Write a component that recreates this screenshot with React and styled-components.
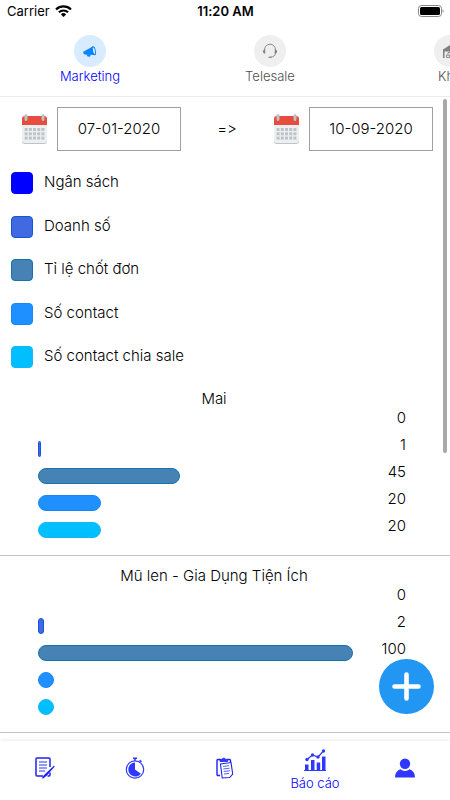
import React, { useState } from "react";
import styled, { createGlobalStyle } from "styled-components";

const GlobalStyle = createGlobalStyle`
  * {
    box-sizing: border-box;
  }
  body {
    margin: 0;
    background-color: #fff;
    color: #000;
    font-family: Inter, "Noto Sans", sans-serif;
    font-size: 15px;
    font-weight: 300;
    font-variant-ligatures: no-contextual;
    line-height: 20px;
  }
  button,
  input {
    font: inherit;
    color: inherit;
  }
`;

const Screen = styled.div`
  height: 100vh;
  display: flex;
  flex-direction: column;
  position: relative;
  overflow: hidden;
`;

const StatusBar = styled.header`
  display: grid;
  grid-template-columns: 1fr auto 1fr;
  align-items: center;
  height: 22px;
  flex-shrink: 0;
  padding: 0 6px 0 7px;
`;

const Carrier = styled.div`
  display: flex;
  align-items: center;
  gap: 5px;
  font-size: 13px;
  font-weight: 400;
`;

const Clock = styled.time`
  font-size: 13px;
  font-weight: 600;
`;

const Battery = styled.svg`
  justify-self: end;
`;

const Tabs = styled.nav`
  display: flex;
  flex-shrink: 0;
  height: 75px;
  overflow: hidden;
  border-bottom: 1px solid #ececec;
`;

const Tab = styled.button`
  flex: 0 0 40%;
  display: flex;
  flex-direction: column;
  align-items: center;
  padding: 13px 0 0;
  border: none;
  background: none;
  font-size: 13px;
  line-height: 18px;
  color: ${props => (props.$active ? "#0000ff" : "#505050")};
`;

const TabIcon = styled.span`
  display: flex;
  width: 32px;
  height: 32px;
  border-radius: 50%;
  background-color: ${props => (props.$active ? "#d9ebff" : "#efefef")};
`;

const Body = styled.main`
  flex: 1;
  min-height: 0;
  position: relative;
  overflow: hidden;
`;

const ScrollThumb = styled.div`
  position: absolute;
  top: 2px;
  right: 3px;
  width: 4px;
  height: 55%;
  border-radius: 2px;
  background-color: #a8a8a8;
`;

const DateRange = styled.form`
  display: flex;
  align-items: center;
  justify-content: space-between;
  padding: 10px 17px 0 21px;
`;

const DateField = styled.label`
  display: flex;
  align-items: center;
  gap: 9px;
`;

const DateInput = styled.input`
  width: 124px;
  height: 44px;
  padding: 0 0 2px;
  border: 1px solid #a0a0a0;
  border-radius: 0;
  background-color: #fff;
  font-variant-ligatures: contextual;
  text-align: center;
  outline: none;
`;

const Legend = styled.ul`
  display: flex;
  flex-direction: column;
  justify-content: space-between;
  height: 196px;
  margin: 21px 0 0;
  padding: 0 11px;
  list-style: none;
`;

const LegendItem = styled.li`
  display: flex;
  gap: 11px;
  height: 22px;
`;

const Swatch = styled.span`
  width: 22px;
  height: 22px;
  border: 1px solid ${props => props.$edge};
  border-radius: 4px;
  background-color: ${props => props.$color};
`;

const Report = styled.section`
  padding: 10px 0 11px;
  border-bottom: 1px solid #c4c4c4;
  &:first-of-type {
    margin-top: 11px;
  }
`;

const ReportTitle = styled.h2`
  margin: 0;
  padding-right: 22px;
  font-size: 15px;
  font-weight: 300;
  text-align: center;
`;

const Row = styled.div`
  display: flex;
  height: 27px;
  padding: 0 44px 0 38px;
`;

const Track = styled.div`
  flex: 1;
  padding-top: 5px;
`;

const Bar = styled.div`
  height: 16px;
  border: 1px solid ${props => props.$edge};
  border-radius: 8px;
  background-color: ${props => props.$color};
`;

const Value = styled.span`
  width: 53px;
  line-height: 18px;
  text-align: right;
`;

const AddButton = styled.button`
  position: absolute;
  right: 16px;
  bottom: 86px;
  display: flex;
  align-items: center;
  justify-content: center;
  width: 55px;
  height: 55px;
  padding: 0;
  border: none;
  border-radius: 50%;
  background-color: #2196f3;
`;

const BottomNav = styled.nav`
  display: flex;
  flex-shrink: 0;
  height: 59px;
  position: relative;
  background-color: #fff;
  box-shadow: 0 -1px 4px rgba(0, 0, 0, 0.08);
`;

const NavItem = styled.a`
  flex: 1;
  display: flex;
  flex-direction: column;
  align-items: center;
  justify-content: center;
  gap: 3px;
  padding-bottom: ${props => (props.$active ? "0" : "5px")};
  color: #0000ff;
  font-size: 13px;
  line-height: 18px;
  text-decoration: none;
`;

const WifiIcon = () => (
  <svg width="17" height="12" viewBox="0 0 17 12" aria-hidden="true">
    <g fill="none" stroke="#000" strokeWidth="2.1">
      <path d="M1 4.4a10.8 10.8 0 0 1 15 0" />
      <path d="M3.9 7.3a6.7 6.7 0 0 1 9.2 0" />
    </g>
    <path d="M8.5 12 5.9 9.4a3.7 3.7 0 0 1 5.2 0z" />
  </svg>
);

const BatteryIcon = () => (
  <Battery width="26" height="12" viewBox="0 0 26 12" aria-label="Battery">
    <rect x=".5" y=".5" width="23" height="11" rx="3" fill="none" stroke="#888" />
    <rect x="2" y="2" width="20" height="8" rx="1.6" />
    <path d="M24.6 4.2c1.2.5 1.2 3.1 0 3.6z" fill="#777" />
  </Battery>
);

const MegaphoneIcon = () => (
  <svg width="32" height="32" viewBox="0 0 32 32" aria-hidden="true">
    <g fill="#0a84ff">
      <path d="M9.3 16.7 18.8 11.6l2.2 8.3-10.3-.4-1.3-1z" />
      <path d="M12.4 19.3h4.4l-.8 2.4-2.4-.1z" />
      <ellipse cx="19.8" cy="15.8" rx="2" ry="4.6" transform="rotate(-12 19.8 15.8)" />
    </g>
    <ellipse cx="20" cy="15.8" rx=".9" ry="3.3" fill="#d9ebff" transform="rotate(-12 20 15.8)" />
  </svg>
);

const HeadsetIcon = () => (
  <svg width="32" height="32" viewBox="0 0 32 32" aria-hidden="true">
    <path
      d="M10.6 16v-1.4a5.4 5.4 0 0 1 10.800 0V18c0 2.600-2 4-4.400 4.200"
      fill="none"
      stroke="#8b8b8b"
      strokeWidth="1"
    />
    <path d="M11.200 14.300v4.500c-3-.2-3-4.300 0-4.500zM20.800 14.300v4.500c3-.2 3-4.300 0-4.500z" fill="#808080" />
    <rect x="14.500" y="21.400" width="3.200" height="1.600" rx=".8" fill="#8b8b8b" />
  </svg>
);

const WarehouseIcon = () => (
  <svg width="32" height="32" viewBox="0 0 32 32" aria-hidden="true">
    <path d="M9 14.500 16 10l7 4.500V23h-1.500v-6.500h-11V23H9z" fill="#808080" />
    <path d="M12.500 22.500v-2.500h3v2.500zM14 19.500v-2h3v2M17.500 22.500v-2.500h3v2.500z" fill="none" stroke="#8b8b8b" />
  </svg>
);

const CalendarIcon = () => (
  <svg width="27" height="30" viewBox="0 0 27 30" aria-hidden="true">
    <path d="M1 10h25v17a3 3 0 0 1-3 3H4a3 3 0 0 1-3-3z" fill="#bdc3c7" />
    <path d="M1 10h25v16a3 3 0 0 1-3 3H4a3 3 0 0 1-3-3z" fill="#ecf0f1" />
    <path d="M1 11V5a3 3 0 0 1 3-3h19a3 3 0 0 1 3 3v6z" fill="#e74c3c" />
    <g fill="#bdc3c7">
      {[14, 18.3, 22.6].map(y =>
        [3.6, 7.8, 12, 16.2, 20.4].map(x => (
          <rect key={`${x}-${y}`} x={x} y={y} width="3" height="3" />
        ))
      )}
    </g>
    <g fill="#c0392b">
      <circle cx="5" cy="5.500" r="1.800" />
      <circle cx="22" cy="5.500" r="1.800" />
    </g>
    <g fill="#bdc3c7">
      <rect x="3.500" y="0" width="3" height="7" rx="1.500" />
      <rect x="20.500" y="0" width="3" height="7" rx="1.500" />
    </g>
  </svg>
);

const PlusIcon = () => (
  <svg width="29" height="29" viewBox="0 0 29 29" aria-hidden="true">
    <path d="M14.500 2.500v24M2.500 14.500h24" stroke="#fff" strokeWidth="4.600" strokeLinecap="round" />
  </svg>
);

const NoteIcon = () => (
  <svg width="22" height="22" viewBox="0 0 22 22" fill="none" stroke="#1c22f5" aria-hidden="true">
    <path d="M16 10V2a1 1 0 0 0-1-1H3a1 1 0 0 0-1 1v16a1 1 0 0 0 1 1h6M16 15.500v2.500a1 1 0 0 1-1 1h-1.500" strokeWidth="1.500" />
    <path d="M5 5h8M5 8h8M5 11h8M5 14h6" strokeWidth="1.300" stroke="#7278ff" />
    <path d="m8.500 21.300 2-3L20.300 9.200l-7.800 8.800z" strokeWidth="1.200" />
  </svg>
);

const TimerIcon = () => (
  <svg width="22" height="22" viewBox="0 0 22 22" aria-hidden="true">
    <g fill="none" stroke="#3038ff">
      <circle cx="11" cy="12.500" r="8.700" strokeWidth="1.200" />
      <path d="M11 1v2.800M9 1.200h4M15.500 3.300l2 1.600" strokeWidth="1.600" />
    </g>
    <path d="M11 5.500v7l5.900 4.200A7 7 0 1 1 11 5.500z" fill="#3038ff" />
  </svg>
);

const ClipboardIcon = () => (
  <svg width="22" height="22" viewBox="0 0 22 22" fill="none" stroke="#1c22f5" aria-hidden="true">
    <path d="M6 18.500H4a1 1 0 0 1-1-1v-14a1 1 0 0 1 1-1h2M13.500 2.500h2a1 1 0 0 1 1 1v2" strokeWidth="1.400" />
    <path d="M6 4.500V2.300h2a2 2 0 0 1 3.600 0h2v2.200z" fill="#3038ff" strokeWidth=".8" />
    <path d="m6.500 7 10.500-1.500 1.700 11.500-3 3.500-7.500.5z" strokeWidth="1.100" />
    <path d="m9 9.500 6-.9M9.300 12l6.300-.8M9.700 14.500l6.300-.8M10 17l5-.6" stroke="#5a60ff" />
  </svg>
);

const ChartIcon = () => (
  <svg width="22" height="22" viewBox="0 0 22 22" fill="#3038ff" aria-hidden="true">
    <path d="M0 21h22v1H0zM1 15.500h3.500V21H1zM7 11h3.500v10H7zM12.700 13.500h3.500V21h-3.500zM18 7.500h3.500V21H18z" />
    <path d="m3 10.500 5.500-4.500 5.500 2 5.500-6" fill="none" stroke="#3038ff" strokeWidth="1.200" />
    <circle cx="3" cy="10.500" r="1.700" />
    <circle cx="8.500" cy="6" r="1.700" />
    <circle cx="14" cy="8" r="1.700" />
    <circle cx="19.500" cy="2" r="1.700" />
  </svg>
);

const PersonIcon = () => (
  <svg width="22" height="22" viewBox="0 0 22 22" fill="#3038ff" aria-hidden="true">
    <circle cx="11" cy="6.700" r="5.200" />
    <path d="M1 20.500c0-4.200 2-7 5.300-8.200a7.200 7.200 0 0 0 9.400 0c3.300 1.200 5.300 4 5.300 8.200z" />
  </svg>
);

const metrics = [
  { name: "Ngân sách", color: "#0000ff", edge: "#0000ff" },
  { name: "Doanh số", color: "#4169e1", edge: "#1455dc" },
  { name: "Tỉ lệ chốt đơn", color: "#4682b4", edge: "#1472ad" },
  { name: "Số contact", color: "#1e90ff", edge: "#1687fa" },
  { name: "Số contact chia sale", color: "#00bfff", edge: "#12b9f8" }
];

const reports = [
  { title: "Mai", values: [0, 1, 45, 20, 20] },
  { title: "Mũ len - Gia Dụng Tiện Ích", values: [0, 2, 100, 5, 5] }
];

const tabs = [
  { name: "Marketing", Icon: MegaphoneIcon },
  { name: "Telesale", Icon: HeadsetIcon },
  { name: "Kho", Icon: WarehouseIcon }
];

const navItems = [
  { id: "notes", label: "Ghi chú", Icon: NoteIcon },
  { id: "time", label: "Chấm công", Icon: TimerIcon },
  { id: "tasks", label: "Công việc", Icon: ClipboardIcon },
  { id: "report", label: "Báo cáo", Icon: ChartIcon },
  { id: "profile", label: "Tài khoản", Icon: PersonIcon }
];

const App = () => {
  const [tab, setTab] = useState("Marketing");
  const [page, setPage] = useState("report");
  const [from, setFrom] = useState("07-01-2020");
  const [to, setTo] = useState("10-09-2020");

  return (
    <Screen>
      <GlobalStyle />
      <StatusBar>
        <Carrier>
          Carrier
          <WifiIcon />
        </Carrier>
        <Clock>11:20 AM</Clock>
        <BatteryIcon />
      </StatusBar>
      <Tabs>
        {tabs.map(({ name, Icon }) => (
          <Tab key={name} type="button" $active={tab === name} onClick={() => setTab(name)}>
            <TabIcon $active={tab === name}>
              <Icon />
            </TabIcon>
            {name}
          </Tab>
        ))}
      </Tabs>
      <Body>
        <DateRange>
          <DateField>
            <CalendarIcon />
            <DateInput
              type="text"
              aria-label="Từ ngày"
              value={from}
              onChange={e => setFrom(e.target.value)}
            />
          </DateField>
          <span>=&gt;</span>
          <DateField>
            <CalendarIcon />
            <DateInput
              type="text"
              aria-label="Đến ngày"
              value={to}
              onChange={e => setTo(e.target.value)}
            />
          </DateField>
        </DateRange>
        <Legend>
          {metrics.map(metric => (
            <LegendItem key={metric.name}>
              <Swatch $color={metric.color} $edge={metric.edge} />
              {metric.name}
            </LegendItem>
          ))}
        </Legend>
        {reports.map(report => (
          <Report key={report.title}>
            <ReportTitle>{report.title}</ReportTitle>
            {report.values.map((value, index) => (
              <Row key={metrics[index].name}>
                <Track>
                  {value > 0 && (
                    <Bar
                      $color={metrics[index].color}
                      $edge={metrics[index].edge}
                      style={{ width: `${value}%` }}
                    />
                  )}
                </Track>
                <Value>{value}</Value>
              </Row>
            ))}
          </Report>
        ))}
        <ScrollThumb />
      </Body>
      <BottomNav>
        {navItems.map(({ id, label, Icon }) => (
          <NavItem
            key={id}
            href={`#${id}`}
            aria-label={label}
            $active={page === id}
            onClick={() => setPage(id)}
          >
            <Icon />
            {page === id && label}
          </NavItem>
        ))}
      </BottomNav>
      <AddButton type="button" aria-label="Thêm">
        <PlusIcon />
      </AddButton>
    </Screen>
  );
};

export default App;
